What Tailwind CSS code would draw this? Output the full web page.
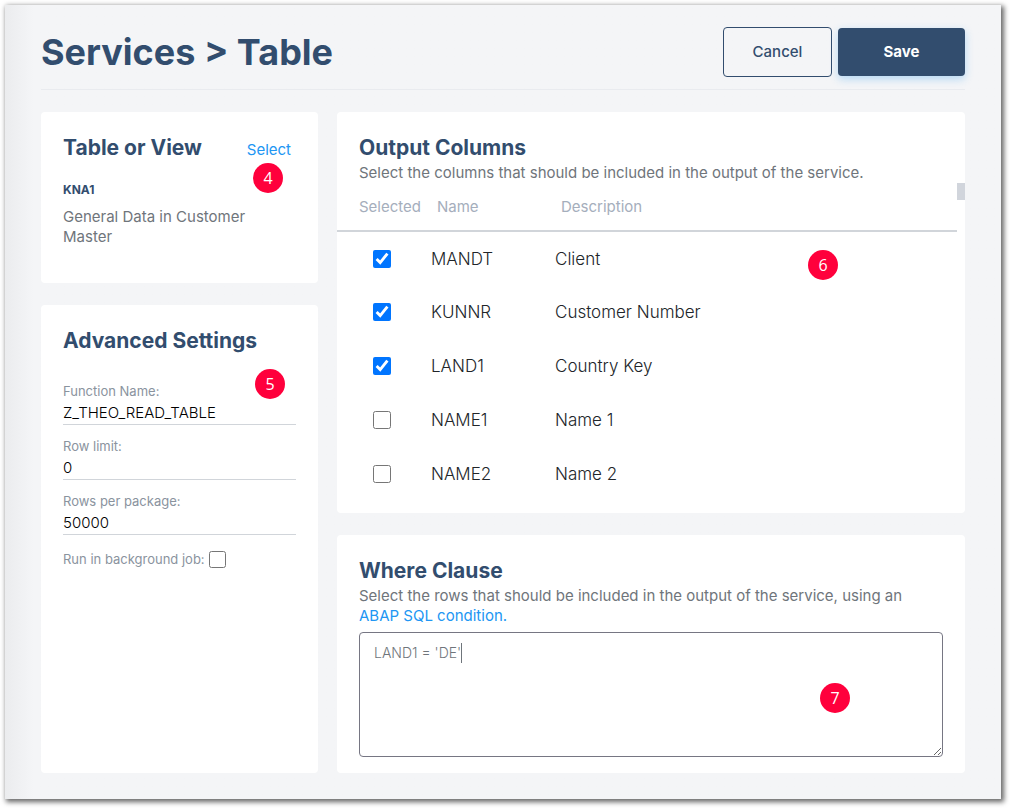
<!DOCTYPE html>
<html lang="en">
<head>
<meta charset="utf-8">
<meta name="viewport" content="width=device-width, initial-scale=1">
<title>Services &gt; Table</title>
<script src="https://cdn.jsdelivr.net/npm/@tailwindcss/browser@4"></script>
</head>
<body class="flex min-h-screen flex-col bg-white pt-[5px] pr-[9px] pb-[9px] pl-[5px] font-['Inter',sans-serif] text-[15px] leading-5 text-[#6f757b]">
<div class="flex grow flex-col bg-[#f4f5f7] bg-linear-to-r from-[#ebecee] to-[#f4f5f7] to-[28px] px-9 pt-[22px] pb-[26px] shadow-[2px_2px_5px_1px_rgba(0,0,0,0.6)]">
  <header class="flex items-center justify-between border-b border-[#e9ebef] pb-3">
    <h1 class="text-[36px] leading-[50px] font-bold text-[#324d6e]">Services &gt; Table</h1>
    <div class="flex items-center gap-[6px] text-[15px]">
      <button type="button" class="h-[50px] w-[109px] rounded border border-[#324d6e] font-medium text-[#324d6e]">Cancel</button>
      <button type="button" class="h-12 w-[127px] rounded bg-[#324d6e] font-bold text-white shadow-[0_3px_8px_rgba(33,150,243,0.3)]">Save</button>
    </div>
  </header>

  <main class="mt-[22px] grid grow grid-cols-[277fr_628fr] gap-x-[19px]">
    <div class="flex flex-col gap-[22px]">
      <section class="relative h-[171px] rounded bg-white px-[22px] pt-[22px]">
        <div class="flex items-center justify-between pr-[5px]">
          <h2 class="text-[21px] leading-7 font-bold text-[#324d6e]">Table or View</h2>
          <a href="#" class="pt-1 text-[#2196f3]">Select</a>
        </div>
        <h3 class="mt-[18px] text-[12px] leading-5 font-bold text-[#324d6e]">KNA1</h3>
        <p class="mt-[7px]">General Data in Customer Master</p>
        <span class="absolute top-[51px] right-[35px] flex size-[30px] items-center justify-center rounded-full bg-[#ff003c] font-['Open_Sans',sans-serif] text-[16px] text-white">4</span>
      </section>

      <section class="relative grow rounded bg-white px-[22px] pt-[22px]">
        <h2 class="text-[21px] leading-7 font-bold text-[#324d6e]">Advanced Settings</h2>
        <form class="mt-[26px] flex flex-col gap-[11px] text-[13px] text-[#8a939e]">
          <div class="flex flex-col">
            <label for="fn">Function Name:</label>
            <input id="fn" type="text" value="Z_THEO_READ_TABLE" class="h-6 w-full border-b border-[#d1d5da] text-[15px] font-light text-black">
          </div>
          <div class="flex flex-col">
            <label for="limit">Row limit:</label>
            <input id="limit" type="text" value="0" class="h-6 w-full border-b border-[#d1d5da] text-[15px] font-light text-black">
          </div>
          <div class="flex flex-col">
            <label for="package">Rows per package:</label>
            <input id="package" type="text" value="50000" class="h-6 w-full border-b border-[#d1d5da] text-[15px] font-light text-black">
          </div>
          <div class="mt-[3px] flex items-center gap-1">
            <label for="bg">Run in background job:</label>
            <input id="bg" type="checkbox" class="size-[17px]">
          </div>
        </form>
        <span class="absolute top-16 right-[33px] flex size-[30px] items-center justify-center rounded-full bg-[#ff003c] font-['Open_Sans',sans-serif] text-[16px] text-white">5</span>
      </section>
    </div>

    <div class="flex flex-col gap-[22px]">
      <section class="relative rounded bg-white pt-[22px] pb-[12px]">
        <div class="px-[22px]">
          <h2 class="text-[21px] leading-7 font-bold text-[#324d6e]">Output Columns</h2>
          <p class="mt-px">Select the columns that should be included in the output of the service.</p>
        </div>
        <div class="flex">
          <table class="w-full table-fixed border-collapse text-left">
            <colgroup><col class="w-[78px]"><col class="w-[124px]"><col></colgroup>
            <thead class="border-b-2 border-[#d1d5da] text-[#a5aebc]">
              <tr class="h-12">
                <th scope="col" class="pl-[22px] font-normal">Selected</th>
                <th scope="col" class="pl-[22px] font-normal">Name</th>
                <th scope="col" class="pl-[22px] font-normal">Description</th>
              </tr>
            </thead>
            <tbody class="text-[17px] font-light text-[#212529]">
              <tr class="h-[54px]"><td class="pl-9"><input type="checkbox" checked aria-label="MANDT" class="block size-[18px] accent-[#0075ff]"></td><td class="pl-4">MANDT</td><td class="pl-4">Client</td></tr>
              <tr class="h-[54px]"><td class="pl-9"><input type="checkbox" checked aria-label="KUNNR" class="block size-[18px] accent-[#0075ff]"></td><td class="pl-4">KUNNR</td><td class="pl-4">Customer Number</td></tr>
              <tr class="h-[54px]"><td class="pl-9"><input type="checkbox" checked aria-label="LAND1" class="block size-[18px] accent-[#0075ff]"></td><td class="pl-4">LAND1</td><td class="pl-4">Country Key</td></tr>
              <tr class="h-[54px]"><td class="pl-9"><input type="checkbox" aria-label="NAME1" class="block size-[18px]"></td><td class="pl-4">NAME1</td><td class="pl-4">Name 1</td></tr>
              <tr class="h-[54px]"><td class="pl-9"><input type="checkbox" aria-label="NAME2" class="block size-[18px]"></td><td class="pl-4">NAME2</td><td class="pl-4">Name 2</td></tr>
            </tbody>
          </table>
          <div class="w-2 shrink-0"><div class="h-[17px] bg-[#d1d5dc]"></div></div>
        </div>
        <span class="absolute top-[138px] right-[127px] flex size-[30px] items-center justify-center rounded-full bg-[#ff003c] font-['Open_Sans',sans-serif] text-[16px] text-white">6</span>
      </section>

      <section class="relative flex grow flex-col rounded bg-white px-[22px] pt-[22px] pb-4">
        <h2 class="text-[21px] leading-7 font-bold text-[#324d6e]">Where Clause</h2>
        <p class="mt-px"><label for="where">Select the rows that should be included in the output of the service, using an</label> <a href="#" class="text-[#2196f3]">ABAP SQL condition.</a></p>
        <div class="relative mt-[6px] flex grow">
          <textarea id="where" spellcheck="false" class="w-full resize rounded border border-[#767683] px-[14px] py-[10px] text-[14px] leading-5 font-light">LAND1 = 'DE'</textarea>
          <span class="absolute top-[11px] left-[102px] h-5 w-px bg-[#6f757b]"></span>
        </div>
        <span class="absolute top-[148px] right-[115px] flex size-[30px] items-center justify-center rounded-full bg-[#ff003c] font-['Open_Sans',sans-serif] text-[16px] text-white">7</span>
      </section>
    </div>
  </main>
</div>
</body>
</html>
